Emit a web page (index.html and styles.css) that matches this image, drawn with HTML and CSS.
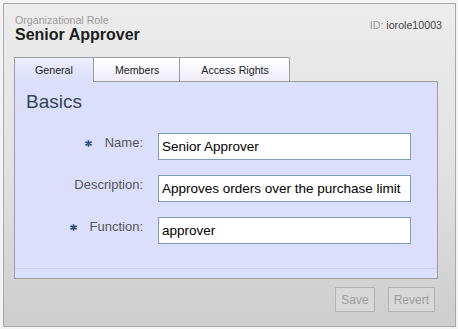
FILE: index.html
```html
<!DOCTYPE html>
<html>
<head>
<meta charset="utf-8">
<link rel="stylesheet" href="styles.css">
</head>
<body>
<div class="window">
  <div class="header">
    <div class="titles">
      <div class="kind">Organizational Role</div>
      <div class="title">Senior Approver</div>
    </div>
    <div class="ident"><span class="id-label">ID:</span> iorole10003</div>
  </div>
  <div class="tabs">
    <div class="tab active">General</div>
    <div class="tab">Members</div>
    <div class="tab">Access Rights</div>
  </div>
  <div class="panel">
    <div class="section">Basics</div>
    <div class="form">
      <label class="label"><svg class="req" width="9" height="7" viewBox="0 0 9 7"><path d="M4.5 0.2V6.8M1.4 1.7L7.6 5.3M7.6 1.7L1.4 5.3" stroke="#2d4f7f" stroke-width="1.7" fill="none"/></svg>Name:</label>
      <div class="field">Senior Approver</div>
      <label class="label">Description:</label>
      <div class="field">Approves orders over the purchase limit</div>
      <label class="label"><svg class="req" width="9" height="7" viewBox="0 0 9 7"><path d="M4.5 0.2V6.8M1.4 1.7L7.6 5.3M7.6 1.7L1.4 5.3" stroke="#2d4f7f" stroke-width="1.7" fill="none"/></svg>Function:</label>
      <div class="field">approver</div>
    </div>
    <div class="panel-foot"></div>
  </div>
  <div class="actions">
    <button class="btn">Save</button>
    <button class="btn">Revert</button>
  </div>
</div>
</body>
</html>
```
FILE: styles.css
```css
html, body {
  margin: 0;
  padding: 0;
  background: #f3f3f3;
  font-family: "Liberation Sans", Arial, sans-serif;
}

.window {
  box-sizing: border-box;
  width: 453px;
  height: 324px;
  margin: 3px;
  border: 1px solid #a9a9a9;
  padding: 10px 17px 0 10px;
  background: linear-gradient(#ececec, #e2e2e2 50%, #cdcdcd);
}

.header {
  display: flex;
  justify-content: space-between;
  align-items: flex-start;
  padding-left: 1px;
}

.kind {
  font-size: 10.67px;
  line-height: 12px;
  color: #9a9a9a;
}

.title {
  font-size: 16px;
  font-weight: bold;
  line-height: 18px;
  color: #1e1e1e;
}

.ident {
  font-size: 10.67px;
  line-height: 12px;
  color: #444;
  margin-top: 5px;
  margin-right: -4px;
}

.id-label {
  color: #9a9a9a;
}

.tabs {
  display: flex;
  margin-top: 13px;
  position: relative;
  z-index: 1;
}

.tab {
  box-sizing: border-box;
  height: 24px;
  padding: 0 20px;
  border: 1px solid #9c9c9c;
  border-bottom: none;
  font-size: 10.67px;
  line-height: 24px;
  color: #222;
  background: linear-gradient(#ffffff, #efecfa);
}

.tab + .tab {
  border-left: none;
  padding-left: 21px;
}

.tab.active {
  height: 25px;
  margin-bottom: -1px;
  background: linear-gradient(#eef0fd, #e6e8fc 30%, #dcdffb);
  line-height: 24px;
}

.panel {
  box-sizing: border-box;
  width: 424px;
  border: 1px solid #9c9c9c;
  background: #dcdffb;
  padding-top: 9px;
}

.section {
  font-size: 19px;
  line-height: 22px;
  color: #344556;
  padding-left: 11px;
}

.form {
  display: grid;
  grid-template-columns: 128px 253px;
  column-gap: 15px;
  row-gap: 15px;
  margin-top: 20px;
}

.label {
  font-size: 13px;
  line-height: 16px;
  padding-top: 2px;
  color: #555;
  text-align: right;
}

.req {
  display: inline-block;
  vertical-align: baseline;
  margin-right: 12px;
}

.field {
  box-sizing: border-box;
  height: 27px;
  border: 1px solid #7f9db9;
  background: #fff;
  padding: 0 3px;
  font-size: 13.5px;
  line-height: 25px;
  color: #000;
  white-space: nowrap;
  overflow: hidden;
}

.panel-foot {
  margin-top: 24px;
  height: 9px;
  border-top: 1px solid #cbcfee;
}

.actions {
  display: flex;
  justify-content: flex-end;
  gap: 13px;
  margin-top: 8px;
  padding-right: 3px;
}

.btn {
  box-sizing: border-box;
  height: 25px;
  padding: 0 5px;
  border: 1px solid #b3b3b3;
  background: #d8d8d8;
  color: #9d9d9d;
  font-family: "Liberation Sans", Arial, sans-serif;
  font-size: 12px;
}
```
